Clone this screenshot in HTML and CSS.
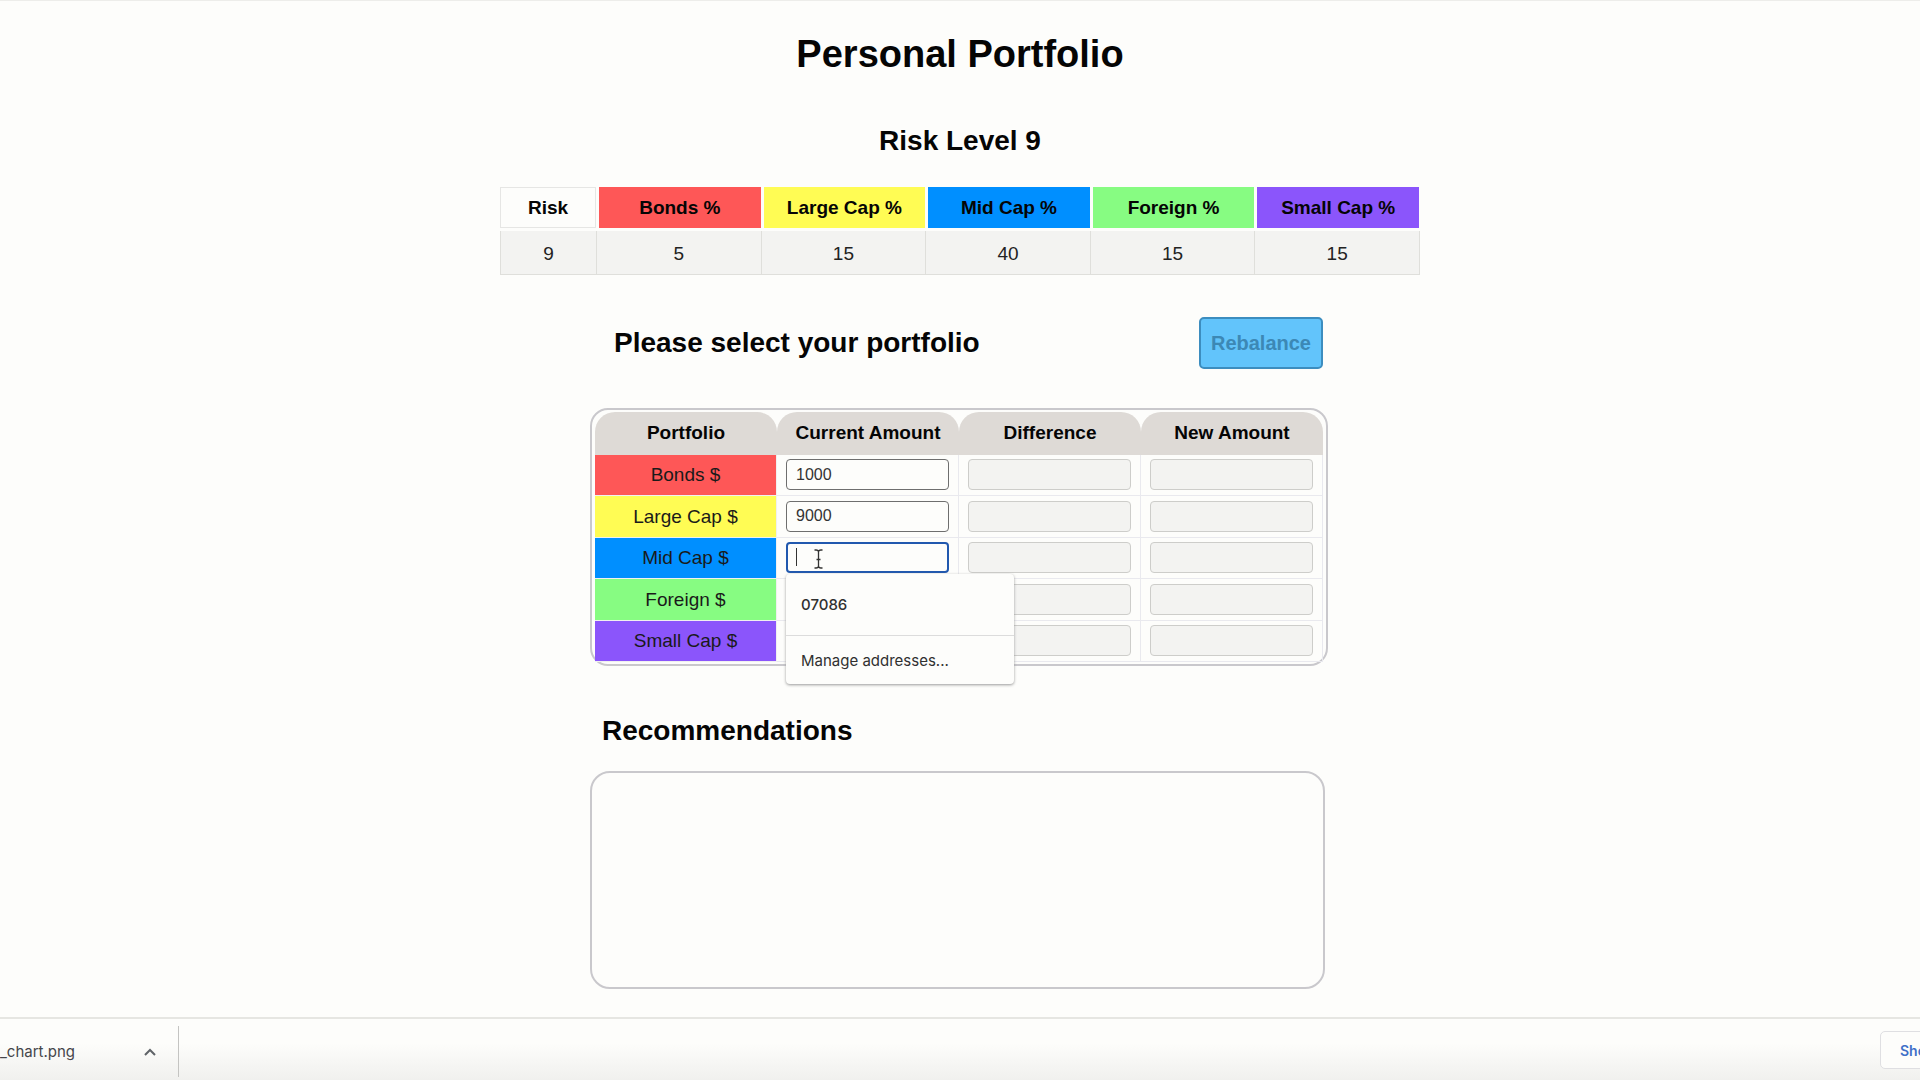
FILE: index.html
```html
<!DOCTYPE html>
<html lang="en">
<head>
<meta charset="utf-8">
<title>Personal Portfolio</title>
<link rel="stylesheet" href="styles.css">
</head>
<body>
<main class="page">
  <h1 class="title">Personal Portfolio</h1>
  <h2 class="heading risk-heading">Risk Level 9</h2>

  <table class="risk-table">
    <thead>
      <tr>
        <th class="risk-col"><div class="label plain">Risk</div></th>
        <th><div class="label bonds">Bonds %</div></th>
        <th><div class="label large">Large Cap %</div></th>
        <th><div class="label mid">Mid Cap %</div></th>
        <th><div class="label foreign">Foreign %</div></th>
        <th><div class="label small">Small Cap %</div></th>
      </tr>
    </thead>
    <tbody>
      <tr><td>9</td><td>5</td><td>15</td><td>40</td><td>15</td><td>15</td></tr>
    </tbody>
  </table>

  <section class="portfolio">
    <div class="toolbar">
      <h2 class="heading">Please select your portfolio</h2>
      <button class="rebalance" type="button" disabled>Rebalance</button>
    </div>

    <div class="frame">
      <table class="amounts">
        <thead>
          <tr><th>Portfolio</th><th>Current Amount</th><th>Difference</th><th>New Amount</th></tr>
        </thead>
        <tbody>
          <tr>
            <th class="bonds" scope="row">Bonds $</th>
            <td><input type="text" value="1000" aria-label="Bonds current amount"></td>
            <td><input type="text" disabled aria-label="Bonds difference"></td>
            <td><input type="text" disabled aria-label="Bonds new amount"></td>
          </tr>
          <tr>
            <th class="large" scope="row">Large Cap $</th>
            <td><input type="text" value="9000" aria-label="Large cap current amount"></td>
            <td><input type="text" disabled aria-label="Large cap difference"></td>
            <td><input type="text" disabled aria-label="Large cap new amount"></td>
          </tr>
          <tr>
            <th class="mid" scope="row">Mid Cap $</th>
            <td>
              <div class="field">
                <input class="active" type="text" aria-label="Mid cap current amount">
                <span class="caret"></span>
                <svg class="pointer" width="9" height="20" viewBox="0 0 9 20" fill="none" stroke="#333" stroke-width="1.3"><path d="M.5 1h1.500q2.500 0 2.500 2v14q0 2-2.500 2H.5M8.500 1H7q-2.500 0-2.500 2M8.500 19H7q-2.500 0-2.500-2M2.500 10.500h4"/></svg>
                <div class="suggestions">
                  <button class="option value" type="button">07086</button>
                  <button class="option manage" type="button">Manage addresses...</button>
                </div>
              </div>
            </td>
            <td><input type="text" disabled aria-label="Mid cap difference"></td>
            <td><input type="text" disabled aria-label="Mid cap new amount"></td>
          </tr>
          <tr>
            <th class="foreign" scope="row">Foreign $</th>
            <td><input type="text" aria-label="Foreign current amount"></td>
            <td><input type="text" disabled aria-label="Foreign difference"></td>
            <td><input type="text" disabled aria-label="Foreign new amount"></td>
          </tr>
          <tr>
            <th class="small" scope="row">Small Cap $</th>
            <td><input type="text" aria-label="Small cap current amount"></td>
            <td><input type="text" disabled aria-label="Small cap difference"></td>
            <td><input type="text" disabled aria-label="Small cap new amount"></td>
          </tr>
        </tbody>
      </table>
    </div>

    <h2 class="heading recommendations">Recommendations</h2>
    <div class="advice"></div>
  </section>
</main>

<footer class="downloads">
  <div class="file">
    <span>_chart.png</span>
    <button class="more" type="button" aria-label="File options">
      <svg width="12" height="8" viewBox="0 0 12 8" fill="none" stroke="#5f6368" stroke-width="2"><path d="M1 7l5-5 5 5"/></svg>
    </button>
  </div>
  <button class="show-all" type="button">Show All</button>
</footer>
</body>
</html>
```
FILE: styles.css
```css
* { box-sizing: border-box; }

body {
  margin: 0;
  min-height: 100vh;
  display: flex;
  flex-direction: column;
  overflow: hidden;
  border-top: 1px solid #ededea;
  background: #fdfdfb;
  color: #050505;
  font-family: "Liberation Sans", Arial, sans-serif;
  font-size: 19px;
}

.page {
  display: flex;
  flex-direction: column;
  align-items: center;
  padding: 31px 16px 28px;
}

.title {
  margin: 0;
  font-size: 38px;
  line-height: 44px;
}

.heading {
  margin: 0;
  font-size: 28px;
  line-height: 32px;
}

.risk-heading { margin-top: 49px; }

.bonds { background: #fe5757; }
.large { background: #fffc54; }
.mid { background: #008fff; }
.foreign { background: #87fc82; }
.small { background: #8b55fb; }

.risk-table {
  width: 100%;
  max-width: 920px;
  margin-top: 30px;
  table-layout: fixed;
  border-collapse: separate;
  border-spacing: 0;
  text-align: center;
}

.risk-col { width: 97px; }

.risk-table th { padding: 0 1px 3px 2px; }
.risk-table th.risk-col { padding-left: 0; }

.risk-table .label { line-height: 41px; }

.plain { box-shadow: inset 0 0 0 1px #e6e6e4; }

.risk-table td {
  height: 44px;
  padding: 2px 0 0;
  background: #f3f3f1;
  border-right: 1px solid #dfdfdb;
  border-bottom: 1px solid #dfdfdb;
  color: #222;
}

.risk-table td:first-child { border-left: 1px solid #dfdfdb; }

.portfolio {
  width: 100%;
  max-width: 740px;
}

.toolbar {
  display: flex;
  align-items: center;
  justify-content: space-between;
  margin-top: 42px;
  padding: 0 7px 0 24px;
}

.rebalance {
  height: 52px;
  padding: 0 10px;
  border: 2px solid #3c8dbf;
  border-radius: 5px;
  background: #62c4fb;
  color: #3c88b5;
  font: bold 20px "Liberation Sans", Arial, sans-serif;
}

.frame {
  max-width: 738px;
  margin-top: 39px;
  padding: 2px 3px;
  border: 2px solid #c9c8cc;
  border-radius: 18px;
}

.amounts {
  width: 100%;
  table-layout: fixed;
  border-collapse: separate;
  border-spacing: 0;
  text-align: center;
}

.amounts th,
.amounts td { padding: 0; }

.amounts thead th {
  height: 43px;
  padding-bottom: 2px;
  border-radius: 20px 20px 0 0;
  background: #dedad6;
}

.amounts tbody tr { height: 41px; }
.amounts tbody tr:nth-child(even) { height: 42px; }

.amounts tbody th {
  border-right: 1px solid #f0f0f0;
  border-bottom: 1px solid #f0f0f0;
  color: #1a1a1a;
  font-weight: normal;
}

.amounts td {
  padding-bottom: 1px;
  border-right: 1px solid #e9e9ee;
  border-bottom: 1px solid #e9e9ee;
}

.amounts input {
  display: block;
  width: calc(100% - 18px);
  height: 31px;
  margin: 0 auto;
  padding: 0 9px;
  border: 1px solid #6e6e6e;
  border-radius: 4px;
  background: #fdfdfb;
  color: #333;
  font: 16px "Liberation Sans", Arial, sans-serif;
  outline: none;
}

.amounts input:disabled {
  border-color: #cdcdca;
  background: #f3f3f1;
}

.amounts input.active { border: 2px solid #2158ae; }

.field { position: relative; }

.caret {
  position: absolute;
  left: 19px;
  top: 6px;
  width: 1px;
  height: 18px;
  background: #333;
}

.pointer {
  position: absolute;
  left: 37px;
  top: 7px;
}

.suggestions {
  position: absolute;
  z-index: 1;
  left: 9px;
  top: 32px;
  width: 228px;
  border-radius: 4px;
  background: #fdfdfb;
  box-shadow: 0 1px 3px #999;
}

.option {
  display: block;
  width: 100%;
  padding: 0 15px;
  border: 0;
  background: none;
  color: #303030;
  font: 15px Inter, sans-serif;
  text-align: left;
}

.value {
  height: 62px;
  border-bottom: 1px solid #dcdcdc;
  font-weight: 500;
}

.manage { height: 48px; }

.recommendations {
  margin-top: 49px;
  padding-left: 12px;
}

.advice {
  max-width: 735px;
  height: 218px;
  margin-top: 24px;
  border: 2px solid #c9c8cc;
  border-radius: 20px;
}

.downloads {
  display: flex;
  justify-content: space-between;
  height: 63px;
  margin-top: auto;
  padding: 7px 0 3px;
  border-top: 2px solid #e6e6e2;
  background: linear-gradient(#fdfdfb 40%, #f0f0ee);
}

.file {
  display: flex;
  align-items: center;
  justify-content: space-between;
  width: 179px;
  padding-right: 22px;
  border-right: 1px solid #c4c4c2;
  color: #45464a;
  font: 15px Inter, sans-serif;
}

.more {
  display: flex;
  padding: 0;
  border: 0;
  background: none;
}

.show-all {
  height: 38px;
  margin: 5px -60px 0 0;
  width: 100px;
  padding: 0 0 0 19px;
  border: 1px solid #dfdfe2;
  border-radius: 5px;
  background: #fdfdfb;
  color: #3f70c8;
  font: 600 14px Inter, sans-serif;
  text-align: left;
  white-space: nowrap;
}
```
